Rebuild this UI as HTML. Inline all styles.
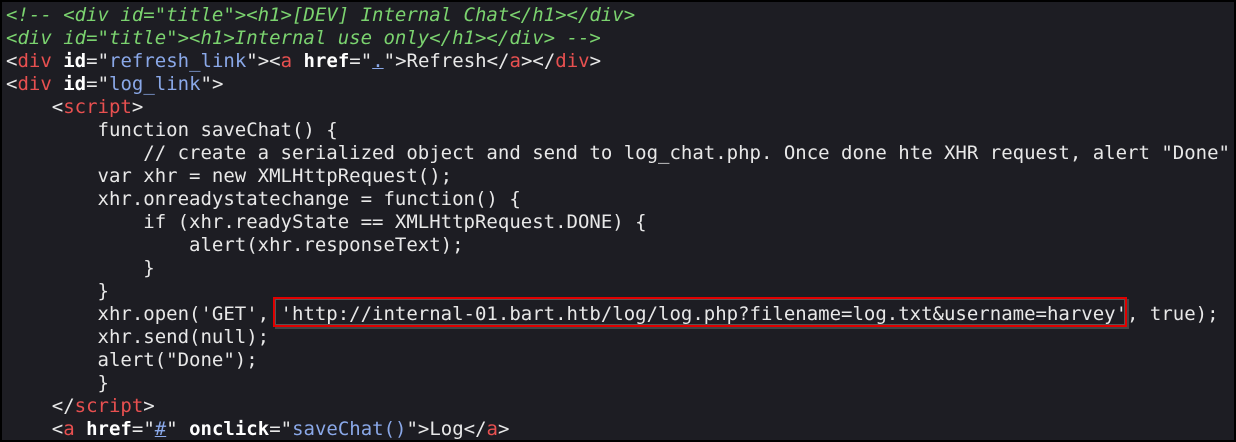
<!DOCTYPE html>
<html><head><meta charset="utf-8"><style>
body{margin:0;width:1236px;height:442px;overflow:hidden;background:#000;}
.f{position:absolute;left:0;top:2px;width:1232px;height:438px;background:#1d1d23;border-left:2px solid #000;}
pre{position:absolute;left:6px;top:4px;margin:0;font-family:"DejaVu Sans Mono","Liberation Mono",monospace;font-size:19px;line-height:23px;color:#e8e8e8;white-space:pre;}
.c{color:#7bd36f;font-style:italic}
.t{color:#e85050}
.a{color:#fff;font-weight:bold}
.s{color:#8aa8e8}
.u{text-decoration:underline}
.box{position:absolute;left:273px;top:297px;width:850px;height:26px;border:2px solid #e00000;box-shadow:inset 0 0 0 1px #555,2px 2px 0 #444;}
</style></head><body>
<div class="f"></div>
<pre><span class="c">&lt;!-- &lt;div id="title"&gt;&lt;h1&gt;[DEV] Internal Chat&lt;/h1&gt;&lt;/div&gt;
&lt;div id="title"&gt;&lt;h1&gt;Internal use only&lt;/h1&gt;&lt;/div&gt; --&gt;</span>
&lt;<span class="t">div</span> <span class="a">id</span>="<span class="s">refresh_link</span>"&gt;&lt;<span class="t">a</span> <span class="a">href</span>="<span class="s u">.</span>"&gt;Refresh&lt;/<span class="t">a</span>&gt;&lt;/<span class="t">div</span>&gt;
&lt;<span class="t">div</span> <span class="a">id</span>="<span class="s">log_link</span>"&gt;
    &lt;<span class="t">script</span>&gt;
        function saveChat() {
            // create a serialized object and send to log_chat.php. Once done hte XHR request, alert "Done"
        var xhr = new XMLHttpRequest();
        xhr.onreadystatechange = function() {
            if (xhr.readyState == XMLHttpRequest.DONE) {
                alert(xhr.responseText);
            }
        }
        xhr.open('GET', 'http://internal-01.bart.htb/log/log.php?filename=log.txt&amp;username=harvey', true);
        xhr.send(null);
        alert("Done");
        }
    &lt;/<span class="t">script</span>&gt;
    &lt;<span class="t">a</span> <span class="a">href</span>="<span class="s u">#</span>" <span class="a">onclick</span>="<span class="s">saveChat()</span>"&gt;Log&lt;/<span class="t">a</span>&gt;</pre>
<div class="box"></div>
</body></html>
